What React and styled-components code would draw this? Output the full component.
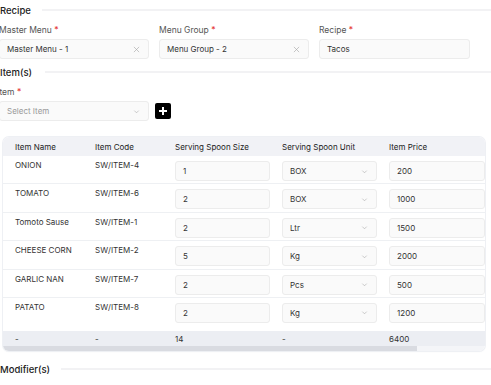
import React from "react";
import styled, { createGlobalStyle } from "styled-components";

const Global = createGlobalStyle`
  html, body { margin: 0; padding: 0; background: #fff; }
  body { font-family: Inter, "Noto Sans", sans-serif; color: #333; overflow: hidden; }
  * { box-sizing: border-box; }
`;

const Page = styled.div`
  width: 492px;
  margin-left: -1px;
  display: flex;
  flex-direction: column;
`;

const SectionTitle = styled.div`
  display: flex;
  align-items: center;
  gap: ${(p) => p.$gap || 10}px;
  height: 20px;
  margin-top: ${(p) => p.$mt || 0}px;
  font-size: 9.5px;
  font-weight: 500;
  color: #222;
  padding-left: 1px;
`;

const Rule = styled.div`
  flex: 1;
  height: 2px;
  background: #f2f2f4;
`;

const FieldGrid = styled.div`
  display: grid;
  grid-template-columns: 150px 150px 151px;
  column-gap: 10px;
  margin-top: 4px;
`;

const Field = styled.div`
  display: flex;
  flex-direction: column;
`;

const Label = styled.div`
  font-size: 8.5px;
  line-height: 12px;
  color: #555;
  margin-bottom: 3px;
  span { color: #e53935; }
`;

const Input = styled.div`
  height: 20px;
  display: flex;
  align-items: center;
  justify-content: space-between;
  padding: 0 8px 0 7px;
  background: #fafafa;
  border: 1px solid #ececec;
  border-radius: 3px;
  font-size: 8px;
  color: ${(p) => (p.$placeholder ? "#999" : "#333")};
  width: ${(p) => p.$w || "auto"};
`;

const Icon = styled.svg`
  width: 7px;
  height: 7px;
  flex: none;
`;

const ItemRow = styled.div`
  display: flex;
  align-items: center;
  gap: 6px;
  margin-bottom: 16px;
`;

const ItemLabelWrap = styled.div`
  margin-top: 4px;
  margin-left: -2px;
`;

const PlusButton = styled.button`
  width: 16px;
  height: 16px;
  padding: 0;
  border: none;
  border-radius: 2px;
  background: #000;
  display: flex;
  align-items: center;
  justify-content: center;
`;

const Card = styled.div`
  margin-left: 4px;
  width: 482px;
  border-radius: 6px;
  overflow: hidden;
  background: #fff;
  box-shadow: 0 0 0 1px #eef0f4, 0 1px 2px rgba(0,0,0,0.04);
`;

const Viewport = styled.div`
  overflow: hidden;
`;

const Table = styled.div`
  width: 561px;
`;

const ScrollTrack = styled.div`
  height: 5px;
  background: #f4f5f8;
`;

const ScrollThumb = styled.div`
  height: 100%;
  width: ${(p) => p.$w}px;
  background: #d9dbe1;
`;

const GridRow = styled.div`
  display: grid;
  grid-template-columns: 80px 80px 107px 107px 108px 79px;
  height: ${(p) => p.$h}px;
  background: ${(p) => p.$bg || "#fff"};
  border-bottom: ${(p) => (p.$line ? "1px solid #eef0f3" : "none")};
  border-top: ${(p) => (p.$gapTop ? "5px solid #fff" : "none")};
  align-items: ${(p) => p.$align || "start"};
`;

const Cell = styled.div`
  padding-left: 12px;
  padding-top: ${(p) => p.$pt ?? 3}px;
  font-size: 8px;
  line-height: 12px;
  color: ${(p) => (p.$head ? "#222" : "#333")};
  white-space: nowrap;
`;

const rows = [
  ["ONION", "SW/ITEM-4", "1", "BOX", "200"],
  ["TOMATO", "SW/ITEM-6", "2", "BOX", "1000"],
  ["Tomoto Sause", "SW/ITEM-1", "2", "Ltr", "1500"],
  ["CHEESE CORN", "SW/ITEM-2", "5", "Kg", "2000"],
  ["GARLIC NAN", "SW/ITEM-7", "2", "Pcs", "500"],
  ["PATATO", "SW/ITEM-8", "2", "Kg", "1200"],
];

const Close = () => (
  <Icon viewBox="0 0 8 8">
    <path d="M1 1 L7 7 M7 1 L1 7" stroke="#a5a5a5" strokeWidth="0.7" fill="none" />
  </Icon>
);

const Chevron = () => (
  <Icon viewBox="0 0 8 8">
    <path d="M1.5 3 L4 5.5 L6.5 3" stroke="#aaa" strokeWidth="0.7" fill="none" />
  </Icon>
);

export default function App() {
  return (
    <>
      <Global />
      <Page>
        <SectionTitle $gap={11}>
          Recipe
          <Rule />
        </SectionTitle>
        <FieldGrid>
          <Field>
            <Label>Master Menu <span>*</span></Label>
            <Input>Master Menu - 1<Close /></Input>
          </Field>
          <Field>
            <Label>Menu Group <span>*</span></Label>
            <Input>Menu Group - 2<Close /></Input>
          </Field>
          <Field>
            <Label>Recipe <span>*</span></Label>
            <Input>Tacos</Input>
          </Field>
        </FieldGrid>
        <SectionTitle $mt={3} $gap={13}>
          Item(s)
          <Rule />
        </SectionTitle>
        <ItemLabelWrap>
          <Label>Item <span>*</span></Label>
        </ItemLabelWrap>
        <ItemRow>
          <Input $w="150px" $placeholder>Select Item<Chevron /></Input>
          <PlusButton aria-label="add">
            <svg width="10" height="10" viewBox="0 0 10 10">
              <path d="M5 1 V9 M1 5 H9" stroke="#fff" strokeWidth="2" />
            </svg>
          </PlusButton>
        </ItemRow>
        <Card>
          <Viewport>
            <Table>
              <GridRow $h={19} $bg="#f1f2f6" $align="center">
                <Cell $head $pt={0}>Item Name</Cell>
                <Cell $head $pt={0}>Item Code</Cell>
                <Cell $head $pt={0}>Serving Spoon Size</Cell>
                <Cell $head $pt={0}>Serving Spoon Unit</Cell>
                <Cell $head $pt={0}>Item Price</Cell>
                <Cell $head $pt={0} />
              </GridRow>
              {rows.map((r, i) => (
                <GridRow key={i} $h={28.4} $line={i < rows.length - 1}>
                  <Cell>{r[0]}</Cell>
                  <Cell>{r[1]}</Cell>
                  <Cell $pt={5}>
                    <Input>{r[2]}</Input>
                  </Cell>
                  <Cell $pt={5}>
                    <Input>{r[3]}<Chevron /></Input>
                  </Cell>
                  <Cell $pt={5}>
                    <Input>{r[4]}</Input>
                  </Cell>
                  <Cell />
                </GridRow>
              ))}
              <GridRow $h={20} $bg="#eceef3" $gapTop $align="center">
                <Cell $pt={0}>-</Cell>
                <Cell $pt={0}>-</Cell>
                <Cell $pt={0}>14</Cell>
                <Cell $pt={0}>-</Cell>
                <Cell $pt={0}>6400</Cell>
                <Cell $pt={0} />
              </GridRow>
            </Table>
          </Viewport>
          <ScrollTrack>
            <ScrollThumb $w={414} />
          </ScrollTrack>
        </Card>
        <SectionTitle $mt={8} $gap={11}>
          Modifier(s)
          <Rule />
        </SectionTitle>
      </Page>
    </>
  );
}
